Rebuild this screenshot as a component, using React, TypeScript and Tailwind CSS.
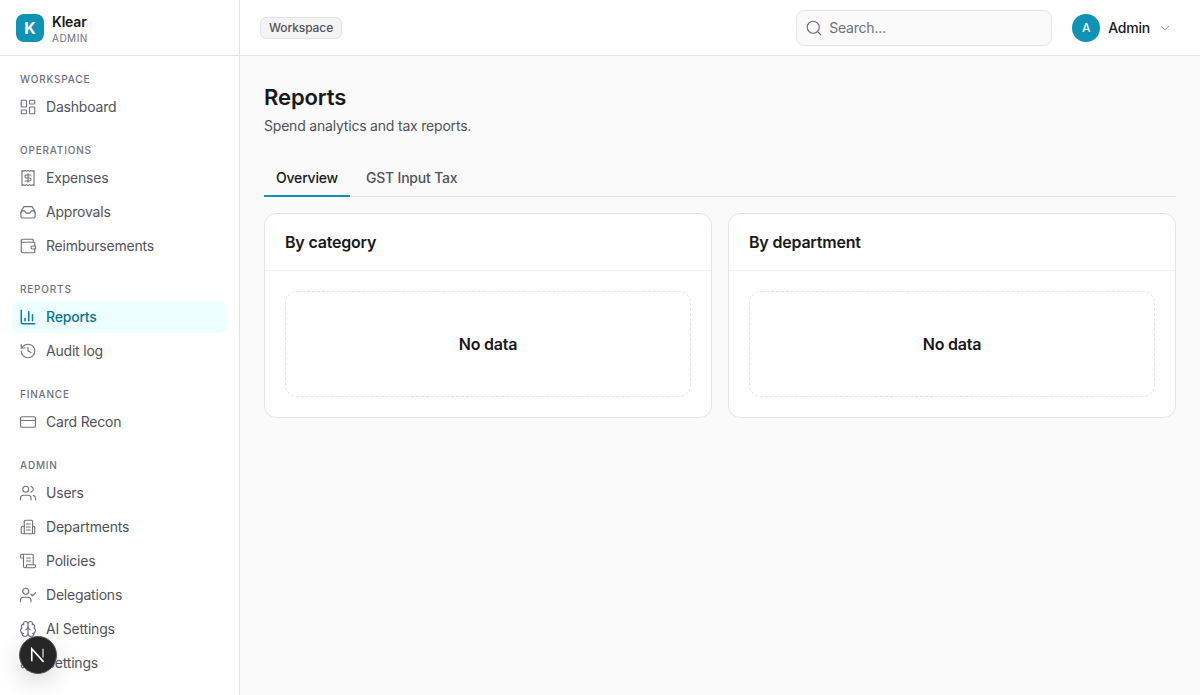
import {
  LayoutDashboard,
  Receipt,
  Wallet,
  ChartColumn,
  History,
  CreditCard,
  Users,
  ScrollText,
  UserCheck,
  Brain,
  Settings,
  Search,
  ChevronDown,
} from "lucide-react"
import type { SVGProps } from "react"

type IconProps = SVGProps<SVGSVGElement> & { size?: number; strokeWidth?: number }

function TrayIcon({ size = 18, strokeWidth = 1.5, ...props }: IconProps) {
  return (
    <svg width={size} height={size} viewBox="0 0 24 24" fill="none" stroke="currentColor" strokeWidth={strokeWidth} strokeLinecap="round" strokeLinejoin="round" {...props}>
      <path d="M2.5 13v5a2 2 0 0 0 2 2h15a2 2 0 0 0 2-2v-5l-3.2-7a2 2 0 0 0-1.8-1.2h-9A2 2 0 0 0 5.700 6Z" />
      <path d="M2.500 13l1.500-2.500h3.500l2 3h5l2-3H20l1.500 2.500" />
    </svg>
  )
}

function DepartmentIcon({ size = 18, strokeWidth = 1.5, ...props }: IconProps) {
  return (
    <svg width={size} height={size} viewBox="0 0 24 24" fill="none" stroke="currentColor" strokeWidth={strokeWidth} strokeLinecap="round" strokeLinejoin="round" {...props}>
      <rect x="7" y="3" width="11" height="18" rx="1.500" />
      <path d="M10 8h5M10 12h5M10 16h5" />
      <path d="M7 11H5a2 2 0 0 0-2 2v6a2 2 0 0 0 2 2h2" />
      <path d="M18 11h1a2 2 0 0 1 2 2v6a2 2 0 0 1-2 2h-1" />
    </svg>
  )
}

const sections = [
  { label: "WORKSPACE", items: [{ name: "Dashboard", icon: LayoutDashboard }] },
  {
    label: "OPERATIONS",
    items: [
      { name: "Expenses", icon: Receipt },
      { name: "Approvals", icon: TrayIcon },
      { name: "Reimbursements", icon: Wallet },
    ],
  },
  {
    label: "REPORTS",
    items: [
      { name: "Reports", icon: ChartColumn, active: true },
      { name: "Audit log", icon: History },
    ],
  },
  { label: "FINANCE", items: [{ name: "Card Recon", icon: CreditCard }] },
  {
    label: "ADMIN",
    items: [
      { name: "Users", icon: Users },
      { name: "Departments", icon: DepartmentIcon },
      { name: "Policies", icon: ScrollText },
      { name: "Delegations", icon: UserCheck },
      { name: "AI Settings", icon: Brain },
      { name: "Settings", icon: Settings },
    ],
  },
]

function Sidebar() {
  return (
    <aside className="flex h-full w-[240px] shrink-0 flex-col border-r border-[#e4e4e7] bg-white">
      <div className="flex h-[56px] shrink-0 items-center gap-2 border-b border-[#e4e4e7] px-4">
        <div className="flex h-[28px] w-[28px] items-center justify-center rounded-lg bg-[#0e93b5] text-base font-bold text-white">
          K
        </div>
        <div className="flex flex-col pt-[3px]">
          <span className="text-sm leading-[18px] font-semibold text-[#18181b]">Klear</span>
          <span className="text-[10px] leading-[14px] tracking-[0.05em] text-[#71717a]">ADMIN</span>
        </div>
      </div>
      <nav className="flex flex-1 flex-col gap-[20px] overflow-hidden px-3 pt-4">
        {sections.map((section) => (
          <div key={section.label} className="flex flex-col gap-[2px]">
            <div className="flex h-[14px] items-center px-2 text-[10px] font-medium tracking-[0.08em] text-[#71717a]">
              {section.label}
            </div>
            <div className="flex flex-col gap-[2px] pt-[3px]">
              {section.items.map((item) => (
                <div
                  key={item.name}
                  className={
                    item.active
                      ? "flex h-[32px] items-center gap-[9px] rounded-lg bg-[#ecfeff] px-[7px] text-sm font-medium text-[#0e7490]"
                      : "flex h-[32px] items-center gap-[9px] rounded-lg px-[7px] text-sm text-[#52525b]"
                  }
                >
                  <item.icon
                    size={18}
                    strokeWidth={item.active ? 2 : 1.5}
                    className={item.active ? "text-[#0e7f9c]" : "text-[#71717a]"}
                  />
                  <span>{item.name}</span>
                </div>
              ))}
            </div>
          </div>
        ))}
      </nav>
    </aside>
  )
}

function Header() {
  return (
    <header className="flex h-[56px] shrink-0 items-center justify-between border-b border-[#e4e4e7] bg-white px-5">
      <span className="rounded-md border border-[#e4e4e7] bg-[#f4f4f5] px-2 py-[2px] text-xs leading-[16px] font-medium tracking-[-0.1px] text-[#52525b]">
        Workspace
      </span>
      <div className="flex items-center gap-3">
        <div className="flex h-[36px] w-[256px] items-center gap-[6px] rounded-lg border border-[#e4e4e7] bg-[#fafafa] px-2 text-sm text-[#71717a]">
          <Search size={18} strokeWidth={1.5} />
          <span>Search...</span>
        </div>
        <div className="flex items-center gap-2 px-2">
          <div className="flex h-[28px] w-[28px] items-center justify-center rounded-full bg-[#0e93b5] text-xs font-medium text-white">
            A
          </div>
          <span className="text-sm font-medium text-[#18181b]">Admin</span>
          <ChevronDown size={14} strokeWidth={1.5} className="text-[#71717a]" />
        </div>
      </div>
    </header>
  )
}

function ReportCard({ title }: { title: string }) {
  return (
    <div className="overflow-hidden rounded-xl border border-[#e4e4e7] bg-white">
      <div className="flex h-[57px] items-center border-b border-[#f4f4f5] px-5 text-base font-semibold text-[#18181b]">
        {title}
      </div>
      <div className="p-5">
        <div className="flex h-[106px] items-center justify-center rounded-xl border border-dashed border-[#e4e4e7] text-base font-semibold text-[#18181b]">
          No data
        </div>
      </div>
    </div>
  )
}

export default function App() {
  return (
    <div className="flex h-screen overflow-hidden bg-[#fafafa] font-['Inter',sans-serif] tracking-[-0.2px]">
      <Sidebar />
      <div className="flex min-w-0 flex-1 flex-col">
        <Header />
        <main className="px-6 pt-[25px] pb-6">
          <h1 className="text-[22px] leading-[32px] font-semibold tracking-[-0.1px] text-[#18181b]">Reports</h1>
          <p className="mt-[3px] text-sm leading-[20px] text-[#52525b]">Spend analytics and tax reports.</p>
          <div className="mt-6 flex border-b border-[#e4e4e7]">
            <div className="-mb-px border-b-2 border-[#0e93b5] px-3 pt-2 pb-[7px] text-sm leading-[20px] font-medium text-[#18181b]">
              Overview
            </div>
            <div className="ml-1 px-3 pt-2 pb-[7px] text-sm leading-[20px] font-medium text-[#52525b]">
              GST Input Tax
            </div>
          </div>
          <div className="mt-4 grid grid-cols-2 gap-4">
            <ReportCard title="By category" />
            <ReportCard title="By department" />
          </div>
        </main>
      </div>
      <div className="fixed bottom-[21px] left-[19px] flex h-[38px] w-[38px] items-center justify-center rounded-full border border-[#555555] bg-[#262626] shadow-[0_8px_24px_rgba(0,0,0,0.15)]">
        <svg width="20" height="20" viewBox="0 0 16 16" fill="none">
          <path d="M3 13V3l9.500 10.500" stroke="white" strokeWidth="1.300" />
          <path d="M12 3v7" stroke="white" strokeWidth="1.200" opacity="0.700" />
        </svg>
      </div>
    </div>
  )
}
